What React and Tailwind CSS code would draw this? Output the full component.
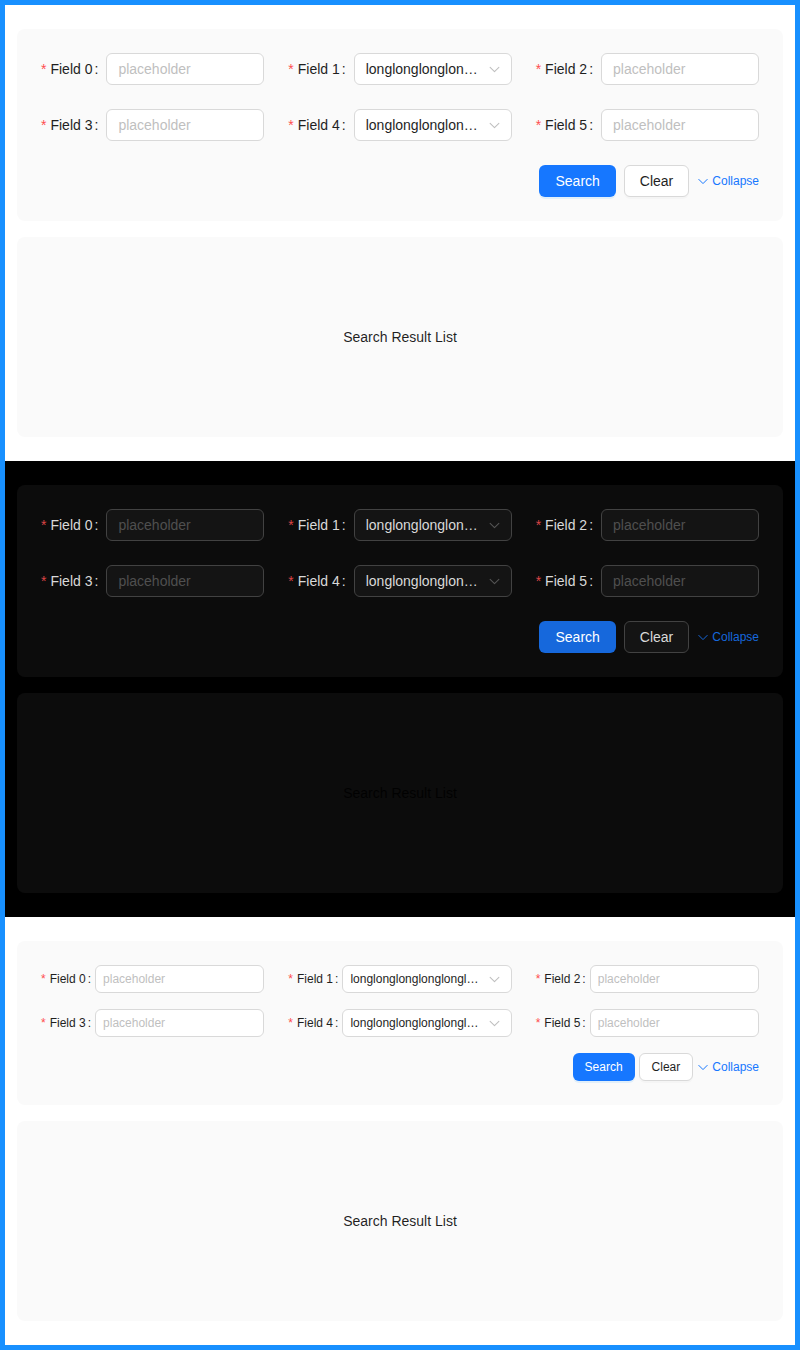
const LONG = 'longlonglonglonglonglonglonglonglonglonglonglong'

const themes = {
  light: {
    page: 'bg-white',
    card: 'bg-[#fafafa]',
    label: 'text-[#1f1f1f]',
    star: 'text-[#ff4d4f]',
    input: 'bg-white border-[#d9d9d9] text-[#1f1f1f] placeholder:text-[#bfbfbf]',
    arrow: '#bfbfbf',
    primary: 'bg-[#1677ff] shadow-[0_2px_0_rgba(5,145,255,0.1)]',
    default: 'bg-white border-[#d9d9d9] text-[#1f1f1f] shadow-[0_2px_0_rgba(0,0,0,0.02)]',
    link: 'text-[#1677ff]',
  },
  dark: {
    page: 'bg-black',
    card: 'bg-[#0c0c0c]',
    label: 'text-[#d9d9d9]',
    star: 'text-[#dc4446]',
    input: 'bg-[#141414] border-[#424242] text-[#d9d9d9] placeholder:text-[#4f4f4f]',
    arrow: '#555555',
    primary: 'bg-[#1668dc]',
    default: 'bg-[#141414] border-[#424242] text-[#d9d9d9]',
    link: 'text-[#1668dc]',
  },
}

const sizes = {
  middle: {
    gapY: 'gap-y-6',
    actions: 'mt-6 gap-2',
    text: 'text-sm',
    field: 'h-8',
    inputPad: 'px-[11px]',
    colon: 'mr-2',
    star: 'mr-1 text-sm',
    primaryBtn: 'h-8 px-4 text-sm',
    btn: 'h-8 px-[15px] text-sm',
    selectPad: 'pl-[11px] pr-[11px]',
  },
  small: {
    gapY: 'gap-y-4',
    actions: 'mt-4 gap-1',
    text: 'text-xs',
    field: 'h-7',
    inputPad: 'px-[7px]',
    colon: 'mr-1',
    star: 'mr-1 text-xs',
    primaryBtn: 'h-7 px-3 text-xs',
    btn: 'h-7 px-3 text-xs',
    selectPad: 'pl-[7px] pr-[11px]',
  },
}

function Chevron({ color, className }) {
  return (
    <svg viewBox="0 0 12 8" className={className} fill="none">
      <polyline points="1,1.5 6,6.5 11,1.5" stroke={color} strokeWidth="1.2" strokeLinecap="round" strokeLinejoin="round" />
    </svg>
  )
}

function Label({ text, t, s }) {
  return (
    <label className={`flex flex-none items-center whitespace-nowrap ${s.text} ${t.label}`}>
      <span className={`${s.star} ${t.star}`}>*</span>
      <span>{text}</span>
      <span className={`ml-0.5 ${s.colon}`}>:</span>
    </label>
  )
}

function InputField({ label, t, s }) {
  return (
    <div className="flex items-center">
      <Label text={label} t={t} s={s} />
      <input
        readOnly
        placeholder="placeholder"
        className={`min-w-0 flex-1 rounded-md border outline-none ${s.field} ${s.inputPad} ${s.text} ${t.input}`}
      />
    </div>
  )
}

function SelectField({ label, t, s }) {
  return (
    <div className="flex items-center">
      <Label text={label} t={t} s={s} />
      <div className={`flex min-w-0 flex-1 items-center rounded-md border ${s.field} ${s.selectPad} ${s.text} ${t.input}`}>
        <span className="min-w-0 flex-1 overflow-hidden text-ellipsis whitespace-nowrap pr-[7px]">{LONG}</span>
        <Chevron color={t.arrow} className="h-[7px] w-[11px] flex-none" />
      </div>
    </div>
  )
}

function SearchSection({ theme, size }) {
  const t = themes[theme]
  const s = sizes[size]
  return (
    <section className={`px-3 py-6 ${t.page}`}>
      <div className={`rounded-lg p-6 ${t.card}`}>
        <div className={`grid grid-cols-3 gap-x-6 ${s.gapY}`}>
          <InputField label="Field 0" t={t} s={s} />
          <SelectField label="Field 1" t={t} s={s} />
          <InputField label="Field 2" t={t} s={s} />
          <InputField label="Field 3" t={t} s={s} />
          <SelectField label="Field 4" t={t} s={s} />
          <InputField label="Field 5" t={t} s={s} />
        </div>
        <div className={`flex items-center justify-end ${s.actions}`}>
          <button className={`rounded-md text-white ${s.primaryBtn} ${t.primary}`}>Search</button>
          <button className={`rounded-md border ${s.btn} ${t.default}`}>Clear</button>
          <a className={`ml-px flex items-center gap-1 text-xs ${t.link}`}>
            <Chevron color="currentColor" className="h-[7px] w-[10px]" />
            Collapse
          </a>
        </div>
      </div>
      <div className={`mt-4 flex h-[200px] items-center justify-center rounded-lg text-sm text-black/[0.88] ${t.card}`}>
        Search Result List
      </div>
    </section>
  )
}

export default function App() {
  return (
    <div className="w-[800px] border-[5px] border-[#1890ff] font-['Liberation_Sans',Arial,sans-serif]">
      <SearchSection theme="light" size="middle" />
      <SearchSection theme="dark" size="middle" />
      <SearchSection theme="light" size="small" />
    </div>
  )
}
